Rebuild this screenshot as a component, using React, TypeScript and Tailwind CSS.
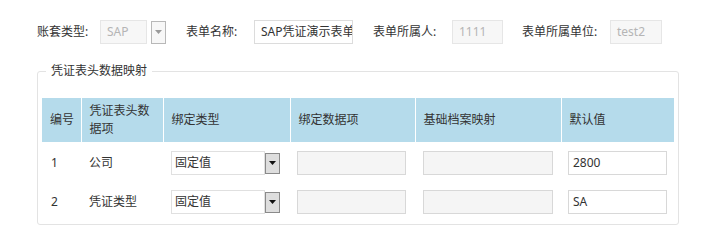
import React from 'react';

const font = { fontFamily: '"Noto Sans", "Noto Sans CJK SC", sans-serif' };

function DropButton({ light }: { light?: boolean }) {
  return (
    <div
      className={
        light
          ? 'w-[15px] h-[23px] border border-[#b8b8b8] bg-[#f7f7f7] flex items-center justify-center'
          : 'w-[15px] h-[21px] border border-[#8a8a8a] bg-[#dedede] flex items-center justify-center'
      }
    >
      <svg width="7" height="4" viewBox="0 0 7 4">
        <path d="M0 0h7L3.5 4z" fill={light ? '#9a9a9a' : '#111'} />
      </svg>
    </div>
  );
}

type Row = { id: number; name: string; value: string };

const rows: Row[] = [
  { id: 1, name: '公司', value: '2800' },
  { id: 2, name: '凭证类型', value: 'SA' },
];

export default function App() {
  return (
    <div className="w-[720px] h-[241px] bg-white text-[12px] text-[#333]" style={font}>
      {/* top filters */}
      <div className="flex items-center pt-[20px] pl-[37px] h-[44px]">
        <span className="w-[63px]">账套类型:</span>
        <div className="w-[47px] h-[24px] border border-[#e6e6e6] bg-[#f7f7f7] text-[#b5b5b5] flex items-center px-[6px]">
          SAP
        </div>
        <div className="ml-[4px]">
          <DropButton light />
        </div>
        <span className="ml-[20px] w-[68px]">表单名称:</span>
        <div className="w-[99px] h-[24px] border border-[#dcdcdc] bg-white flex items-center px-[6px] overflow-hidden whitespace-nowrap">
          SAP凭证演示表单;
        </div>
        <span className="ml-[20px] w-[79px]">表单所属人:</span>
        <div className="w-[51px] h-[24px] border border-[#e6e6e6] bg-[#f7f7f7] text-[#b5b5b5] flex items-center px-[6px]">
          1111
        </div>
        <span className="ml-[19px] w-[88px]">表单所属单位:</span>
        <div className="w-[52px] h-[24px] border border-[#e6e6e6] bg-[#f7f7f7] text-[#b5b5b5] flex items-center px-[6px]">
          test2
        </div>
      </div>

      {/* mapping group */}
      <fieldset className="ml-[37px] mt-[19px] w-[641px] border border-[#e3e3e3] rounded-[3px] px-[4px] pb-[4px]">
        <legend className="ml-[4px] px-[5px] leading-[16px]">凭证表头数据映射</legend>
        <table className="mt-[19px] w-[632px] border-collapse table-fixed">
          <colgroup>
            <col className="w-[39px]" />
            <col className="w-[82px]" />
            <col className="w-[127px]" />
            <col className="w-[125px]" />
            <col className="w-[146px]" />
            <col className="w-[113px]" />
          </colgroup>
          <thead>
            <tr className="h-[44px] bg-[#b5dbeb]">
              {['编号', '凭证表头数据项', '绑定类型', '绑定数据项', '基础档案映射', '默认值'].map((h) => (
                <th
                  key={h}
                  className="px-[8px] first:pr-[2px] first:whitespace-nowrap text-left font-normal leading-[18px] border-l border-r border-white first:border-l-0 last:border-r-0"
                >
                  {h}
                </th>
              ))}
            </tr>
          </thead>
          <tbody>
            {rows.map((r) => (
              <tr key={r.id} className="h-[39px] align-top">
                <td className="pl-[9px] pt-[9px] leading-[24px]">{r.id}</td>
                <td className="px-[8px] pt-[9px] leading-[24px]">{r.name}</td>
                <td className="px-[8px] pt-[9px]">
                  <div className="flex items-center">
                    <div className="w-[94px] h-[24px] border border-[#e0e0e0] bg-white flex items-center px-[3px]">
                      固定值
                    </div>
                    <DropButton />
                  </div>
                </td>
                <td className="px-[7px] pt-[9px]">
                  <div className="w-[109px] h-[24px] border border-[#d8d8d8] bg-[#f5f5f5]" />
                </td>
                <td className="px-[8px] pt-[9px]">
                  <div className="w-[130px] h-[24px] border border-[#d8d8d8] bg-[#f5f5f5]" />
                </td>
                <td className="px-[7px] pt-[9px]">
                  <div className="w-[99px] h-[24px] border border-[#d8d8d8] bg-white flex items-center px-[4px]">
                    {r.value}
                  </div>
                </td>
              </tr>
            ))}
          </tbody>
        </table>
      </fieldset>
    </div>
  );
}
